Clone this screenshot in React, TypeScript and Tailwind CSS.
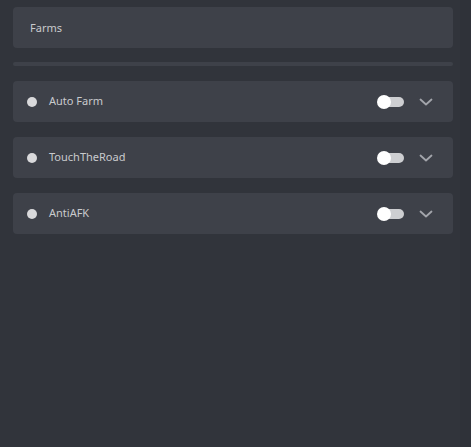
import React from 'react';

const items = ['Auto Farm', 'TouchTheRoad', 'AntiAFK'];

function Toggle() {
  return (
    <div className="relative h-[14px] w-[27px]">
      <div className="absolute left-[2px] top-[2px] h-[10px] w-[25px] rounded-full bg-[#cdced1]" />
      <div className="absolute left-0 top-0 h-[14px] w-[14px] rounded-full bg-white" />
    </div>
  );
}

function Chevron() {
  return (
    <svg width="14" height="8" viewBox="0 0 14 8" fill="none">
      <path d="M1.5 1.5 L7 6.5 L12.5 1.5" stroke="#a3a5ab" strokeWidth="1.8" strokeLinecap="round" strokeLinejoin="round" />
    </svg>
  );
}

export default function App() {
  return (
    <div className="flex h-[447px] w-[471px] bg-[#31343b] font-['Noto_Sans',sans-serif] text-[11px] text-[#c9cacd]">
      <div className="flex w-[460px] flex-col pl-[13px] pr-[7px] pt-[7px]">
        <div className="flex h-[41px] items-center rounded-[4px] bg-[#3e4149] pl-[17px] pt-[1px]">Farms</div>
        <div className="mt-[14px] h-[4px] rounded-[2px] bg-[#3e4149]" />
        <div className="mt-[15px] flex flex-col gap-[15px]">
          {items.map((name) => (
            <div key={name} className="flex h-[41px] items-center rounded-[4px] bg-[#3e4149] pl-[14px] pr-[20px]">
              <div className="h-[10px] w-[10px] rounded-full bg-[#d9d9db]" />
              <span className="ml-[12px] flex-1">{name}</span>
              <Toggle />
              <div className="ml-[15px] flex items-center">
                <Chevron />
              </div>
            </div>
          ))}
        </div>
      </div>
      <div className="flex-1 bg-[#2f3239]" />
    </div>
  );
}
